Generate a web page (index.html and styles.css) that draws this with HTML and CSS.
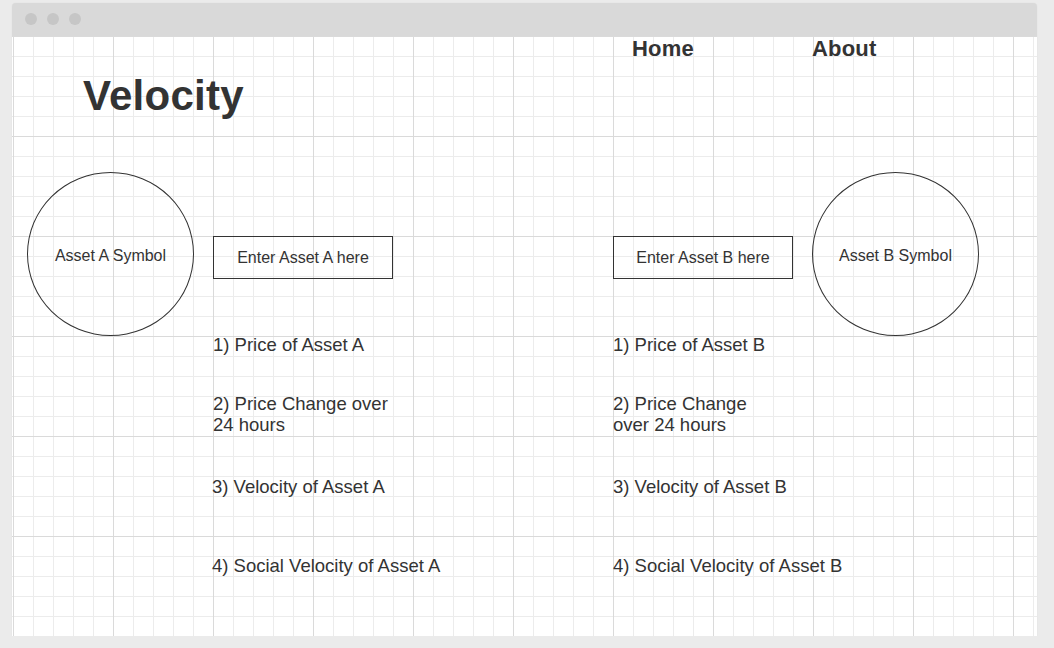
FILE: index.html
```html
<!DOCTYPE html>
<html lang="en">
<head>
<meta charset="utf-8">
<title>Velocity</title>
<link rel="stylesheet" href="styles.css">
</head>
<body>
<div class="window">
  <div class="titlebar">
    <span class="dot"></span><span class="dot"></span><span class="dot"></span>
  </div>
  <div class="canvas">
    <header class="header">
      <nav class="nav">
        <span class="nav-item">Home</span>
        <span class="nav-item">About</span>
      </nav>
      <h1 class="title">Velocity</h1>
    </header>
    <main class="main">
      <div class="symbol">Asset A Symbol</div>
      <section class="asset-col">
        <div class="asset-input">Enter Asset A here</div>
        <ul class="stats">
          <li class="stat stat-1">1) Price of Asset A</li>
          <li class="stat stat-2 wrap-a">2) Price Change over 24 hours</li>
          <li class="stat stat-3 shift">3) Velocity of Asset A</li>
          <li class="stat stat-4 shift">4) Social Velocity of Asset A</li>
        </ul>
      </section>
      <section class="asset-col">
        <div class="asset-input">Enter Asset B here</div>
        <ul class="stats">
          <li class="stat stat-1">1) Price of Asset B</li>
          <li class="stat stat-2 wrap-b">2) Price Change over 24 hours</li>
          <li class="stat stat-3">3) Velocity of Asset B</li>
          <li class="stat stat-4">4) Social Velocity of Asset B</li>
        </ul>
      </section>
      <div class="symbol">Asset B Symbol</div>
    </main>
  </div>
</div>
</body>
</html>
```

FILE: styles.css
```css
* { box-sizing: border-box; }

html, body {
  margin: 0;
  padding: 0;
  background: #ebebeb;
  font-family: "Liberation Sans", Arial, sans-serif;
  color: #333;
}

.window {
  margin: 3px 0 0 12px;
  width: 1025px;
  border-radius: 4px 4px 0 0;
  box-shadow: 0 0 1px rgba(0, 0, 0, 0.12);
  overflow: hidden;
}

.titlebar {
  height: 33px;
  background: #d9d9d9;
  display: flex;
  align-items: center;
  gap: 10px;
  padding: 0 0 1px 13px;
}

.dot {
  width: 12px;
  height: 12px;
  border-radius: 50%;
  background: #c6c6c6;
}

.canvas {
  height: 600px;
  background-color: #fff;
  background-image:
    linear-gradient(to right, #dadada 1px, transparent 1px),
    linear-gradient(to bottom, #dadada 1px, transparent 1px),
    linear-gradient(to right, #ececec 1px, transparent 1px),
    linear-gradient(to bottom, #ececec 1px, transparent 1px);
  background-size: 100px 100px, 100px 100px, 20px 20px, 20px 20px;
  background-position: 1px 0, 0 0, 1px 0, 0 0;
}

.header {
  height: 100px;
}

.nav {
  display: flex;
  gap: 118px;
  padding-left: 620px;
  font-weight: bold;
  font-size: 22px;
  line-height: 26px;
  letter-spacing: 0.2px;
}

.title {
  margin: 13px 0 0 71px;
  font-size: 42px;
  line-height: 42px;
  font-weight: bold;
  letter-spacing: 0.25px;
}

.main {
  display: grid;
  grid-template-columns: 186px 400px 199px 167px;
  align-items: start;
  padding: 36px 0 0 15px;
}

.symbol {
  width: 167px;
  height: 164px;
  border: 1px solid #333;
  border-radius: 50%;
  display: flex;
  align-items: center;
  justify-content: center;
  font-size: 16px;
  padding-top: 4px;
}

.asset-col {
  padding-top: 64px;
  min-width: 0;
}

.asset-input {
  width: 180px;
  height: 43px;
  border: 1px solid #333;
  display: flex;
  align-items: center;
  justify-content: center;
  font-size: 16px;
  padding-top: 1px;
}

.stats {
  list-style: none;
  margin: 0;
  padding: 0;
  font-size: 18.5px;
  line-height: 21px;
}

.stat { white-space: nowrap; }

.stat-1 { margin-top: 55px; }
.stat-2 { margin-top: 38px; }
.stat-3 { margin-top: 41px; }
.stat-4 { margin-top: 58px; }

.wrap-a { width: 185px; white-space: normal; }
.wrap-b { width: 150px; white-space: normal; }

.shift { margin-left: -1px; }
```
